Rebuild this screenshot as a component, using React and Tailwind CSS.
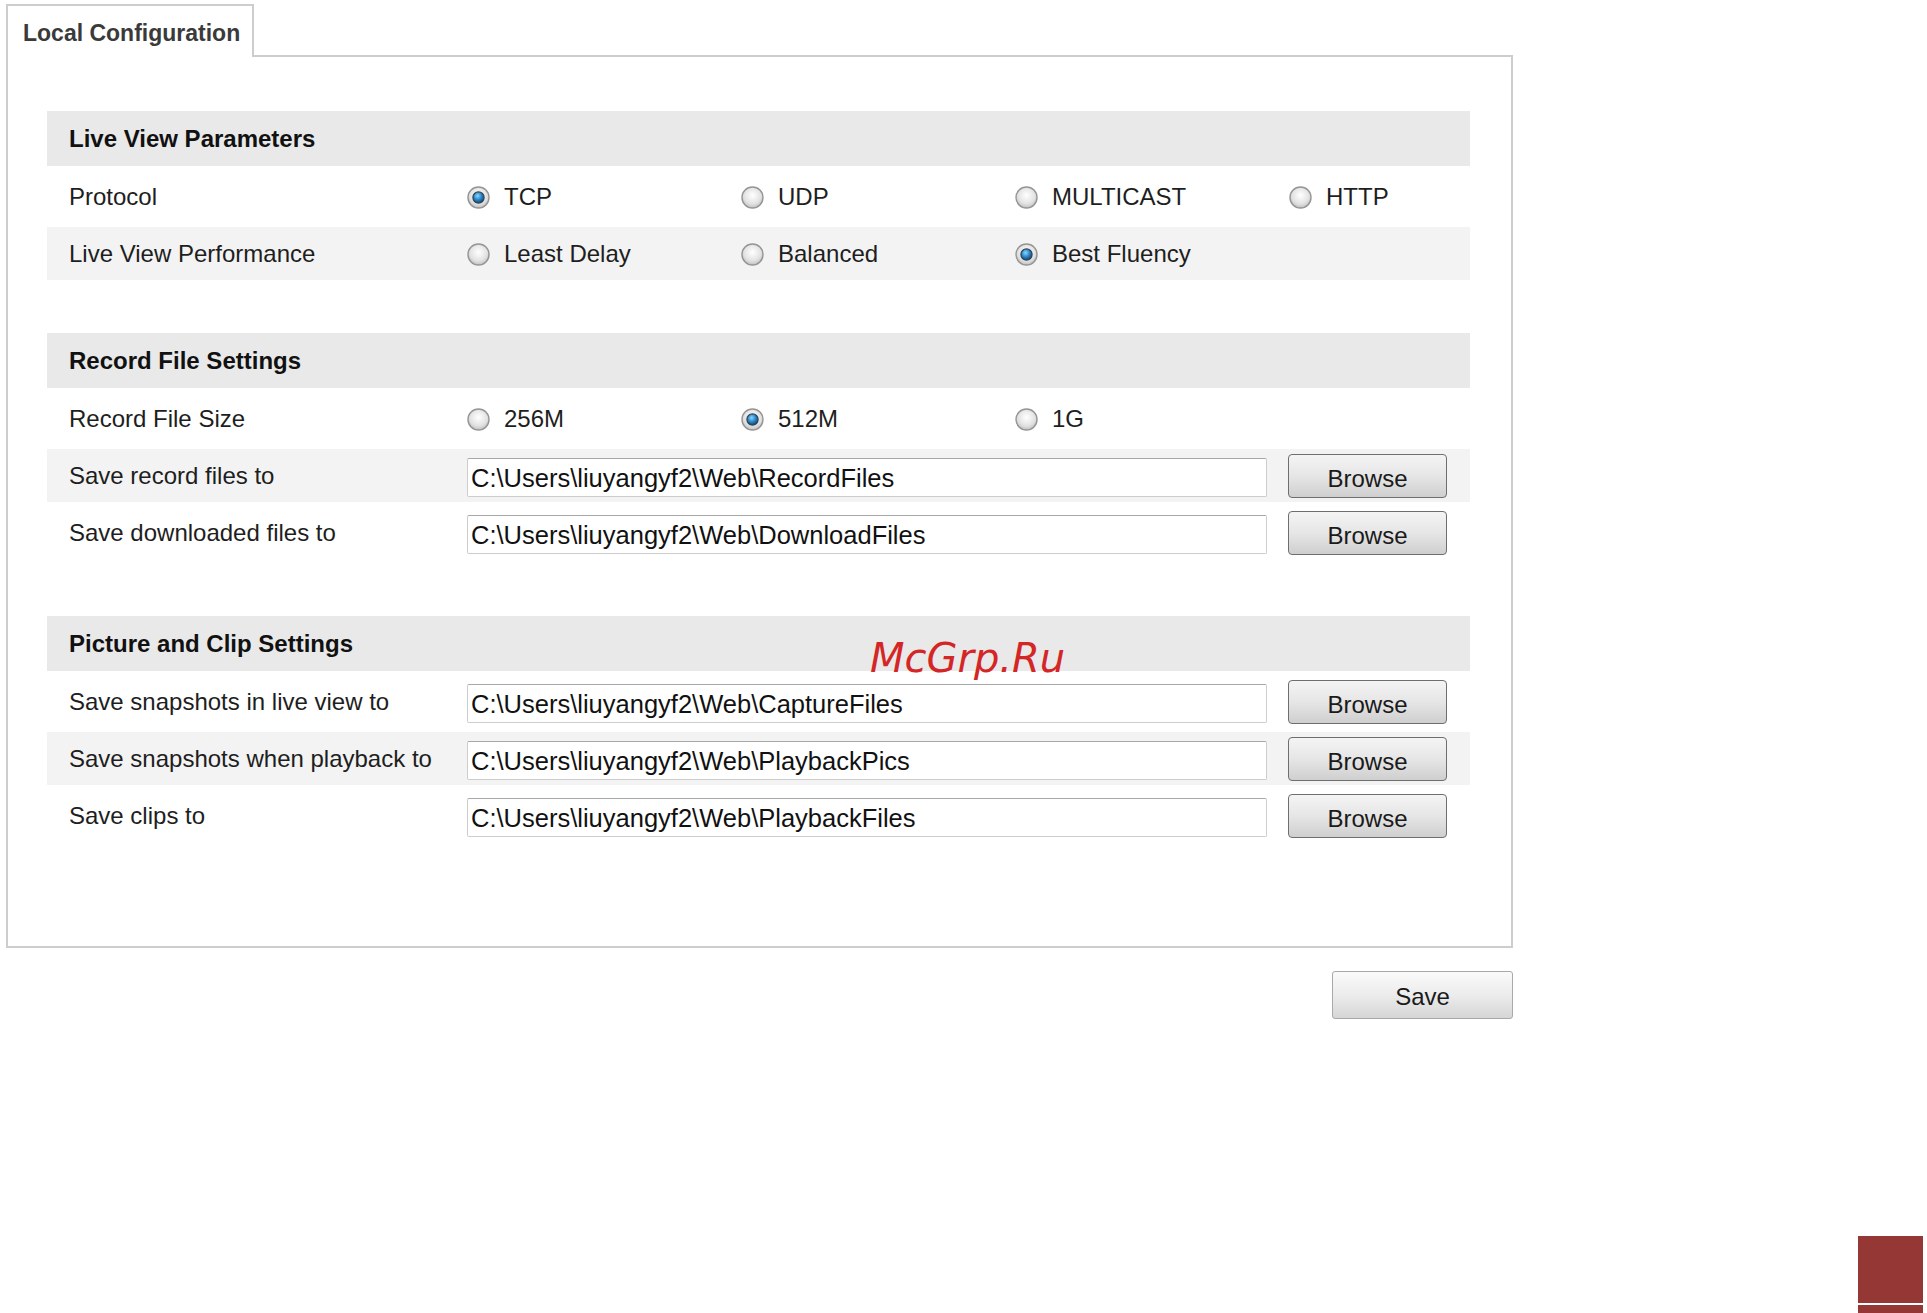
import React from 'react';

const font = { fontFamily: '"Liberation Sans", Arial, sans-serif' };

const sections = [
  {
    title: 'Live View Parameters',
    rows: [
      { label: 'Protocol', radios: ['TCP', 'UDP', 'MULTICAST', 'HTTP'], checked: 0 },
      { label: 'Live View Performance', radios: ['Least Delay', 'Balanced', 'Best Fluency'], checked: 2 },
    ],
  },
  {
    title: 'Record File Settings',
    rows: [
      { label: 'Record File Size', radios: ['256M', '512M', '1G'], checked: 1 },
      { label: 'Save record files to', path: 'C:\\Users\\liuyangyf2\\Web\\RecordFiles' },
      { label: 'Save downloaded files to', path: 'C:\\Users\\liuyangyf2\\Web\\DownloadFiles' },
    ],
  },
  {
    title: 'Picture and Clip Settings',
    rows: [
      { label: 'Save snapshots in live view to', path: 'C:\\Users\\liuyangyf2\\Web\\CaptureFiles' },
      { label: 'Save snapshots when playback to', path: 'C:\\Users\\liuyangyf2\\Web\\PlaybackPics' },
      { label: 'Save clips to', path: 'C:\\Users\\liuyangyf2\\Web\\PlaybackFiles' },
    ],
  },
];

const Radio = ({ checked }) => (
  <svg width="23" height="23" viewBox="0 0 23 23" className="shrink-0 mt-[2px]">
    <defs>
      <radialGradient id="radioOff" cx="50%" cy="40%" r="62%">
        <stop offset="0%" stopColor="#ffffff" />
        <stop offset="65%" stopColor="#e2e2e2" />
        <stop offset="100%" stopColor="#bdbdbd" />
      </radialGradient>
      <radialGradient id="radioOn" cx="42%" cy="35%" r="65%">
        <stop offset="0%" stopColor="#8ad6ff" />
        <stop offset="55%" stopColor="#2a86c8" />
        <stop offset="100%" stopColor="#0b4a82" />
      </radialGradient>
    </defs>
    <circle cx="11.5" cy="11.5" r="10.5" fill="url(#radioOff)" stroke="#959595" strokeWidth="1.4" />
    {checked && <circle cx="11.5" cy="11.5" r="5.6" fill="url(#radioOn)" stroke="#33414f" strokeWidth="1.2" />}
  </svg>
);

const BrowseButton = () => (
  <button
    className="shrink-0 w-[159px] h-[44px] rounded-[4px] border-[1.5px] border-[#6e6e6e] bg-gradient-to-b from-[#f4f4f4] via-[#e6e6e6] to-[#cfcfcf] text-[24px] text-[#1a1a1a] leading-none pt-[7px]"
    style={font}
  >
    Browse
  </button>
);

const Row = ({ row, shaded }) => (
  <div className={`flex items-center ${shaded ? 'h-[53px] bg-[#f3f3f3]' : 'h-[61px]'}`}>
    <div className="w-[420px] shrink-0 pl-[22px] text-[24px] text-[#1e1e1e]">{row.label}</div>
    {row.radios && (
      <div className="flex">
        {row.radios.map((r, i) => (
          <div key={r} className="w-[274px] shrink-0 flex items-center gap-[14px]">
            <Radio checked={i === row.checked} />
            <span className="text-[24px] text-[#1e1e1e] whitespace-nowrap">{r}</span>
          </div>
        ))}
      </div>
    )}
    {row.path && (
      <div className="flex items-center gap-[21px]">
        <input
          readOnly
          value={row.path}
          className="w-[800px] h-[39px] mt-[3px] pl-[3px] pt-[3px] border border-[#cdcdcd] border-t-[#a8a8a8] rounded-[2px] bg-white text-[25.5px] text-[#111] outline-none"
          style={font}
        />
        <BrowseButton />
      </div>
    )}
  </div>
);

const App = () => {
  return (
    <div className="relative w-[1927px] h-[1313px] bg-white overflow-hidden" style={font}>
      <div className="pl-[6px] pt-[4px] w-[1513px]">
        {/* Tab */}
        <div className="relative z-10 w-[248px] h-[53px] -mb-[2px] bg-white border-2 border-b-0 border-[#cdcdcd] pl-[15px] pt-[16px] text-[23px] font-bold text-[#3a3a3a] leading-none">
          Local Configuration
        </div>

        {/* Panel */}
        <div className="border-2 border-[#cdcdcd] pl-[39px] pr-[41px] pt-[54px] pb-[100px]">
          <div className="flex flex-col gap-[53px]">
            {sections.map((s) => (
              <div key={s.title}>
                <div className="h-[55px] bg-[#e9e9e9] flex items-center pl-[22px] text-[24px] font-bold text-[#111]">
                  {s.title}
                </div>
                {s.rows.map((row, i) => (
                  <Row key={row.label} row={row} shaded={i % 2 === 1} />
                ))}
              </div>
            ))}
          </div>
        </div>

        {/* Save */}
        <div className="flex justify-end mt-[23px]">
          <button className="w-[181px] h-[48px] rounded-[3px] border-[1.5px] border-[#a9a9a9] bg-gradient-to-b from-[#fafafa] via-[#ececec] to-[#d6d6d6] text-[24px] text-[#1a1a1a] leading-none pt-[3px]">
            Save
          </button>
        </div>
      </div>

      {/* watermark */}
      <div
        className="absolute left-[870px] top-[638px] text-[40px] leading-[40px] italic text-[#d42626]"
        style={{ fontFamily: '"DejaVu Sans", sans-serif' }}
      >
        McGrp.Ru
      </div>

      {/* page corner mark */}
      <div className="absolute left-[1858px] top-[1236px] w-[65px] flex flex-col gap-[2px]">
        <div className="h-[67px] bg-[#953735]" />
        <div className="h-[8px] bg-[#953735]" />
      </div>
    </div>
  );
};

export default App;
